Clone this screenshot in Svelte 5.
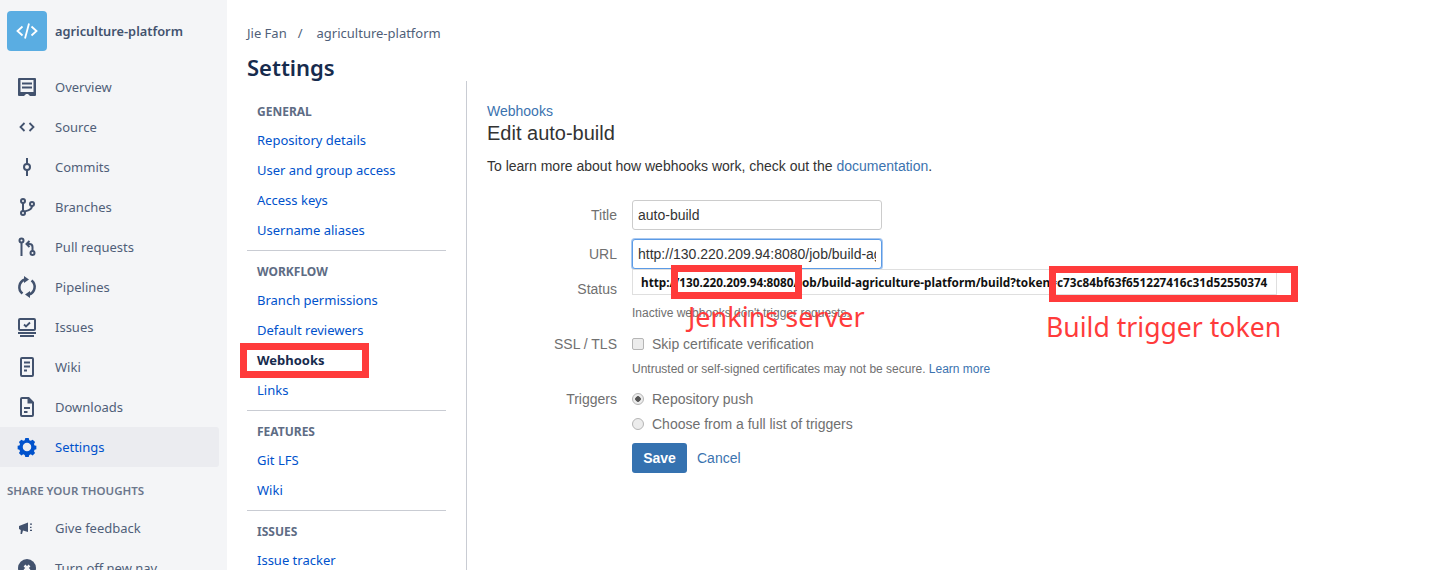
<script>
  const nav = [
    { id: 'overview', label: 'Overview' },
    { id: 'source', label: 'Source' },
    { id: 'commits', label: 'Commits' },
    { id: 'branches', label: 'Branches' },
    { id: 'pulls', label: 'Pull requests' },
    { id: 'pipelines', label: 'Pipelines' },
    { id: 'issues', label: 'Issues' },
    { id: 'wiki', label: 'Wiki' },
    { id: 'downloads', label: 'Downloads' },
    { id: 'settings', label: 'Settings', active: true }
  ];

  const groups = [
    { title: 'GENERAL', items: ['Repository details', 'User and group access', 'Access keys', 'Username aliases'] },
    { title: 'WORKFLOW', items: ['Branch permissions', 'Default reviewers', 'Webhooks', 'Links'] },
    { title: 'FEATURES', items: ['Git LFS', 'Wiki'] },
    { title: 'ISSUES', items: ['Issue tracker'] }
  ];
</script>

{#snippet icon(id)}
  <svg class="icon" viewBox="0 0 24 24" width="24" height="24" aria-hidden="true">
    {#if id === 'overview'}
      <path fill="currentColor" fill-rule="evenodd" d="M4 3h16a1 1 0 0 1 1 1v16a1 1 0 0 1-1 1h-5l-2-2h-2l-2 2H4a1 1 0 0 1-1-1V4a1 1 0 0 1 1-1zm1.500 2v12h13V5z"/>
      <path fill="currentColor" d="M7 7.500h10v2H7zM7 11.500h10v2H7z"/>
    {:else if id === 'source'}
      <path fill="none" stroke="currentColor" stroke-width="1.800" d="M9.500 8l-4 4 4 4M14.500 8l4 4-4 4"/>
    {:else if id === 'commits'}
      <circle cx="12" cy="12" r="3" fill="none" stroke="currentColor" stroke-width="2"/>
      <path stroke="currentColor" stroke-width="2" d="M12 3v6M12 15v6"/>
    {:else if id === 'branches'}
      <g fill="none" stroke="currentColor" stroke-width="2">
        <circle cx="8" cy="6" r="2"/><circle cx="8" cy="18" r="2"/><circle cx="17" cy="9" r="2"/>
        <path d="M8 8v8M17 11c0 4-4 4.500-7.500 5.500"/>
      </g>
    {:else if id === 'pulls'}
      <g fill="none" stroke="currentColor" stroke-width="2">
        <circle cx="6.500" cy="5.500" r="2"/><circle cx="17.500" cy="18" r="2"/>
        <path d="M6.500 7.500V21M17.500 16v-4c0-2-1-3-3-3h-2"/>
        <path d="M14.500 6l-3 3 3 3"/>
      </g>
    {:else if id === 'pipelines'}
      <g fill="none" stroke="currentColor" stroke-width="2.500">
        <path d="M7.500 18.500A8 8 0 0 1 10 4.500"/><path d="M16.500 5.500A8 8 0 0 1 14 19.500"/>
      </g>
      <path fill="currentColor" d="M9 1l5 3.500L9 8zM15 16l-5 3.500 5 3.500z"/>
    {:else if id === 'issues'}
      <path fill="currentColor" fill-rule="evenodd" d="M5 3h14a2 2 0 0 1 2 2v9a2 2 0 0 1-2 2H5a2 2 0 0 1-2-2V5a2 2 0 0 1 2-2zm0 2v9h14V5z"/>
      <path fill="currentColor" d="M3 17h18v2H3zM5 20h14v2H5z"/>
      <path fill="none" stroke="currentColor" stroke-width="1.800" d="M9 9.500l2 2 4-4"/>
    {:else if id === 'wiki'}
      <path fill="currentColor" fill-rule="evenodd" d="M7 2h10a2 2 0 0 1 2 2v16a2 2 0 0 1-2 2H7a2 2 0 0 1-2-2V4a2 2 0 0 1 2-2zm0 2v16h10V4z"/>
      <path fill="currentColor" d="M9 6.500h6v2H9zM9 10.500h6v2H9zM9 14.500h3v2H9z"/>
    {:else if id === 'downloads'}
      <path fill="currentColor" fill-rule="evenodd" d="M7 2h7l5 5v13a2 2 0 0 1-2 2H7a2 2 0 0 1-2-2V4a2 2 0 0 1 2-2zm0 2v16h10V8.500h-4.500V4z"/>
      <path fill="currentColor" d="M9 12h6v2H9zM9 16h3.500v2H9z"/>
    {:else if id === 'settings'}
      <path fill="currentColor" fill-rule="evenodd" d="M10 3h4l.7 2.500 1.700.7 2.300-1.300 2.800 2.800-1.300 2.300.7 1.700 2.100.5v4l-2.100.5-.7 1.700 1.300 2.300-2.800 2.800-2.300-1.300-1.700.7-.7 2.500h-4l-.7-2.500-1.700-.7-2.300 1.300-2.800-2.800 1.300-2.300-.7-1.700-2.100-.5v-4l2.100-.5.700-1.700-1.300-2.300 2.800-2.800 2.300 1.300 1.700-.7zM12 8.500a5 5 0 1 0 0 10 5 5 0 0 0 0-10z" transform="translate(1.800 .5) scale(.85)"/>
    {:else if id === 'feedback'}
      <path fill="currentColor" d="M4 10l9-3.500V16l-5-1.500-1 3.500H5.500l.3-4L4 13z"/>
      <path fill="currentColor" d="M15 7.500h2v1.300h-2zM15 10.700h1.500v1.300H15zM15 13.800h2v1.300h-2z"/>
    {:else if id === 'close'}
      <circle cx="12" cy="12" r="9" fill="currentColor"/>
      <path stroke="#f4f5f7" stroke-width="2.500" d="M9.500 9.500l5 5M14.500 9.500l-5 5"/>
    {/if}
  </svg>
{/snippet}

<div class="page">
  <aside class="sidebar">
    <div class="repo">
      <div class="repo-logo">
        <svg viewBox="0 0 24 24" width="24" height="24" aria-hidden="true">
          <path fill="none" stroke="#fff" stroke-width="1.800" d="M7.500 7.500L2.500 12l5 4.500M16.500 7.500l5 4.500-5 4.500M14 4.500l-4 15"/>
        </svg>
      </div>
      <span class="repo-name">agriculture-platform</span>
    </div>
    <nav class="main-nav">
      {#each nav as item}
        <a href="#{item.id}" class="nav-item" class:active={item.active}>
          {@render icon(item.id)}
          <span>{item.label}</span>
        </a>
      {/each}
    </nav>
    <h4 class="share">SHARE YOUR THOUGHTS</h4>
    <a href="#feedback" class="nav-item">{@render icon('feedback')}<span>Give feedback</span></a>
    <a href="#nav" class="nav-item">{@render icon('close')}<span>Turn off new nav</span></a>
  </aside>

  <main class="main">
    <div class="crumbs"><span>Jie Fan</span><span class="sep">/</span><span>agriculture-platform</span></div>
    <h1>Settings</h1>
    <div class="columns">
      <div class="subnav">
        {#each groups as group, i}
          {#if i > 0}<hr />{/if}
          <h5>{group.title}</h5>
          {#each group.items as label}
            <a href="#{label}" class="sub-item" class:current={label === 'Webhooks'}>
              {label}
              {#if label === 'Webhooks'}<span class="mark mark-hook"></span>{/if}
            </a>
          {/each}
        {/each}
      </div>

      <section class="content">
        <a href="#webhooks" class="back">Webhooks</a>
        <h2>Edit auto-build</h2>
        <p class="intro">To learn more about how webhooks work, check out the <a href="#docs">documentation</a>.</p>

        <form class="form">
          <div class="row field-row">
            <label for="title">Title</label>
            <input id="title" type="text" value="auto-build" />
          </div>
          <div class="row field-row">
            <label for="url">URL</label>
            <input id="url" class="focused" type="text" value="http://130.220.209.94:8080/job/build-agriculture-platform/build" />
          </div>
          <div class="row status-row">
            <span class="label">Status</span>
            <div class="url-strip">
              http://130.220.209.94:8080/job/build-agriculture-platform/build?token=c73c84bf63f651227416c31d52550374
              <span class="mark mark-server"></span>
              <span class="mark mark-token"></span>
              <span class="note note-server">Jenkins server</span>
              <span class="note note-token">Build trigger token</span>
            </div>
          </div>
          <div class="row help-row"><span></span><small>Inactive webhooks don't trigger requests.</small></div>
          <div class="row check-row ssl">
            <span class="label">SSL / TLS</span>
            <label class="check"><input type="checkbox" />Skip certificate verification</label>
          </div>
          <div class="row help-row tight"><span></span><small>Untrusted or self-signed certificates may not be secure. <a href="#more">Learn more</a></small></div>
          <div class="row check-row triggers">
            <span class="label">Triggers</span>
            <label class="check"><input type="radio" name="trigger" checked />Repository push</label>
          </div>
          <div class="row check-row choose">
            <span></span>
            <label class="check"><input type="radio" name="trigger" />Choose from a full list of triggers</label>
          </div>
          <div class="row actions">
            <span></span>
            <div class="buttons"><button type="button">Save</button><a href="#cancel">Cancel</a></div>
          </div>
        </form>
      </section>
    </div>
  </main>
</div>

<style>
  :global(body) {
    overflow: hidden;
    background: #fff;
  }

  .page {
    display: flex;
    height: 570px;
    overflow: hidden;
    font-family: "Noto Sans", "Open Sans", sans-serif;
    font-size: 14px;
    color: #172b4d;
  }

  .sidebar {
    width: 227px;
    flex: none;
    background: #f4f5f7;
    color: #42526e;
  }

  .repo {
    display: flex;
    align-items: center;
    gap: 8px;
    padding: 11px 0 0 7px;
    height: 40px;
    margin-bottom: 16px;
  }

  .repo-logo {
    width: 40px;
    height: 40px;
    border-radius: 4px;
    background: #5aade2;
    display: flex;
    align-items: center;
    justify-content: center;
  }

  .repo-name {
    font-weight: 600;
    font-size: 12.800px;
  }

  .nav-item {
    display: flex;
    align-items: center;
    gap: 16px;
    height: 40px;
    width: 219px;
    padding-left: 15px;
    box-sizing: border-box;
    color: #505f79;
    text-decoration: none;
    font-size: 13px;
    border-radius: 0 3px 3px 0;
  }

  .nav-item .icon {
    color: #42526e;
    flex: none;
  }

  .nav-item.active {
    background: #ebecf0;
    color: #0052cc;
  }

  .nav-item.active .icon {
    color: #0052cc;
  }

  .share {
    margin: 0;
    height: 41px;
    padding: 14px 0 0 7px;
    box-sizing: border-box;
    line-height: 20px;
    font-size: 11.500px;
    font-weight: 600;
    color: #6b778c;
  }

  .main {
    flex: 1;
    padding: 23px 0 0 20px;
    min-width: 0;
  }

  .crumbs {
    display: flex;
    height: 20px;
    line-height: 20px;
    font-size: 13px;
    color: #505f79;
  }

  .sep {
    margin: 0 14px 0 11px;
  }

  h1 {
    margin: 11px 0 0;
    height: 27px;
    line-height: 27px;
    font-size: 22px;
    font-weight: 600;
    color: #172b4d;
  }

  .columns {
    display: flex;
  }

  .subnav {
    width: 199px;
    flex: none;
    padding-top: 20px;
    margin-right: 20px;
  }

  .subnav h5 {
    margin: 0 0 3px 10px;
    padding-top: 1px;
    line-height: 20px;
    font-size: 12px;
    font-weight: 700;
    color: #5e6c84;
  }

  .subnav hr {
    border: none;
    height: 1px;
    background: #c9ccd3;
    margin: 5px 0 10px;
  }

  .sub-item {
    position: relative;
    display: block;
    height: 30px;
    line-height: 30px;
    padding-left: 10px;
    font-size: 13px;
    color: #0052cc;
    text-decoration: none;
  }

  .sub-item.current {
    font-weight: 700;
    color: #172b4d;
  }

  .content {
    border-left: 1px solid #c9ccd3;
    padding: 20px 0 0 20px;
    flex: 1;
    height: 489px;
    font-family: "Liberation Sans", Arial, sans-serif;
  }

  .back {
    display: block;
    line-height: 20px;
    color: #3b73af;
    text-decoration: none;
  }

  h2 {
    margin: 0;
    line-height: 24px;
    font-size: 20px;
    font-weight: 400;
    color: #333;
  }

  .intro {
    margin: 11px 0 24px;
    line-height: 20px;
    color: #333;
  }

  .intro a,
  small a,
  .buttons a {
    color: #3b73af;
    text-decoration: none;
  }

  .row {
    display: grid;
    grid-template-columns: 130px 1fr;
    column-gap: 15px;
  }

  .row > label,
  .label {
    text-align: right;
    color: #707070;
    line-height: 20px;
  }

  .field-row {
    align-items: center;
    margin-bottom: 9px;
  }

  .field-row input {
    width: 250px;
    height: 30px;
    box-sizing: border-box;
    border: 1px solid #ccc;
    border-radius: 3.010px;
    padding: 4px 5px;
    font: 14px "Liberation Sans", Arial, sans-serif;
    color: #333;
  }

  .field-row input.focused {
    border-color: #5b9be6;
    box-shadow: 0 0 0 1px #a9c8f0;
  }

  .status-row {
    margin-top: 10px;
    height: 20px;
  }

  /* pasted-over annotation layer */
  .url-strip {
    position: absolute;
    left: 632px;
    top: 269px;
    width: 645px;
    height: 26px;
    box-sizing: border-box;
    padding-left: 8px;
    background: #fff;
    border: 1px solid #dfdfdf;
    font: 700 11.770px/25px "Noto Sans", "Open Sans", sans-serif;
    color: #111;
    white-space: nowrap;
  }

  .mark {
    position: absolute;
    box-sizing: border-box;
    border: 7px solid #ff3b3b;
  }

  .mark-hook {
    left: -7px;
    top: -2px;
    width: 129px;
    height: 35px;
  }

  .mark-server {
    left: 38px;
    top: -5px;
    width: 131px;
    height: 34px;
  }

  .mark-token {
    left: 416px;
    top: -4px;
    width: 249px;
    height: 36px;
  }

  .note {
    position: absolute;
    font: 400 27px/36px "Noto Sans", "Open Sans", sans-serif;
    color: #ff3b3b;
  }

  .note-server {
    left: 55px;
    top: 29px;
  }

  .note-token {
    left: 413px;
    top: 39px;
    font-size: 26.600px;
  }

  .help-row {
    margin-top: 4px;
    line-height: 20px;
  }

  .help-row.tight {
    margin-top: 5px;
  }

  small {
    font-size: 12px;
    color: #707070;
  }

  .check-row {
    line-height: 20px;
  }

  .ssl {
    margin-top: 11px;
  }

  .triggers {
    margin-top: 10px;
  }

  .choose {
    margin-top: 5px;
  }

  .check {
    display: flex;
    align-items: center;
    color: #333;
  }

  .check input {
    appearance: none;
    width: 12px;
    height: 12px;
    margin: 0 8px 0 0;
    box-sizing: border-box;
    border: 1px solid #b5b5b5;
    border-radius: 2px;
    background: #ececec;
  }

  .check input[type="radio"] {
    border-radius: 50%;
  }

  .check input[type="radio"]:checked {
    background: radial-gradient(circle, #555 0 2.500px, #ececec 3px);
  }

  .actions {
    margin-top: 9px;
  }

  .buttons {
    display: flex;
    align-items: center;
    gap: 10px;
  }

  .buttons button {
    width: 55px;
    height: 30px;
    border: none;
    border-radius: 3px;
    background: #3572b0;
    color: #fff;
    font: 700 14px "Liberation Sans", Arial, sans-serif;
  }
</style>
